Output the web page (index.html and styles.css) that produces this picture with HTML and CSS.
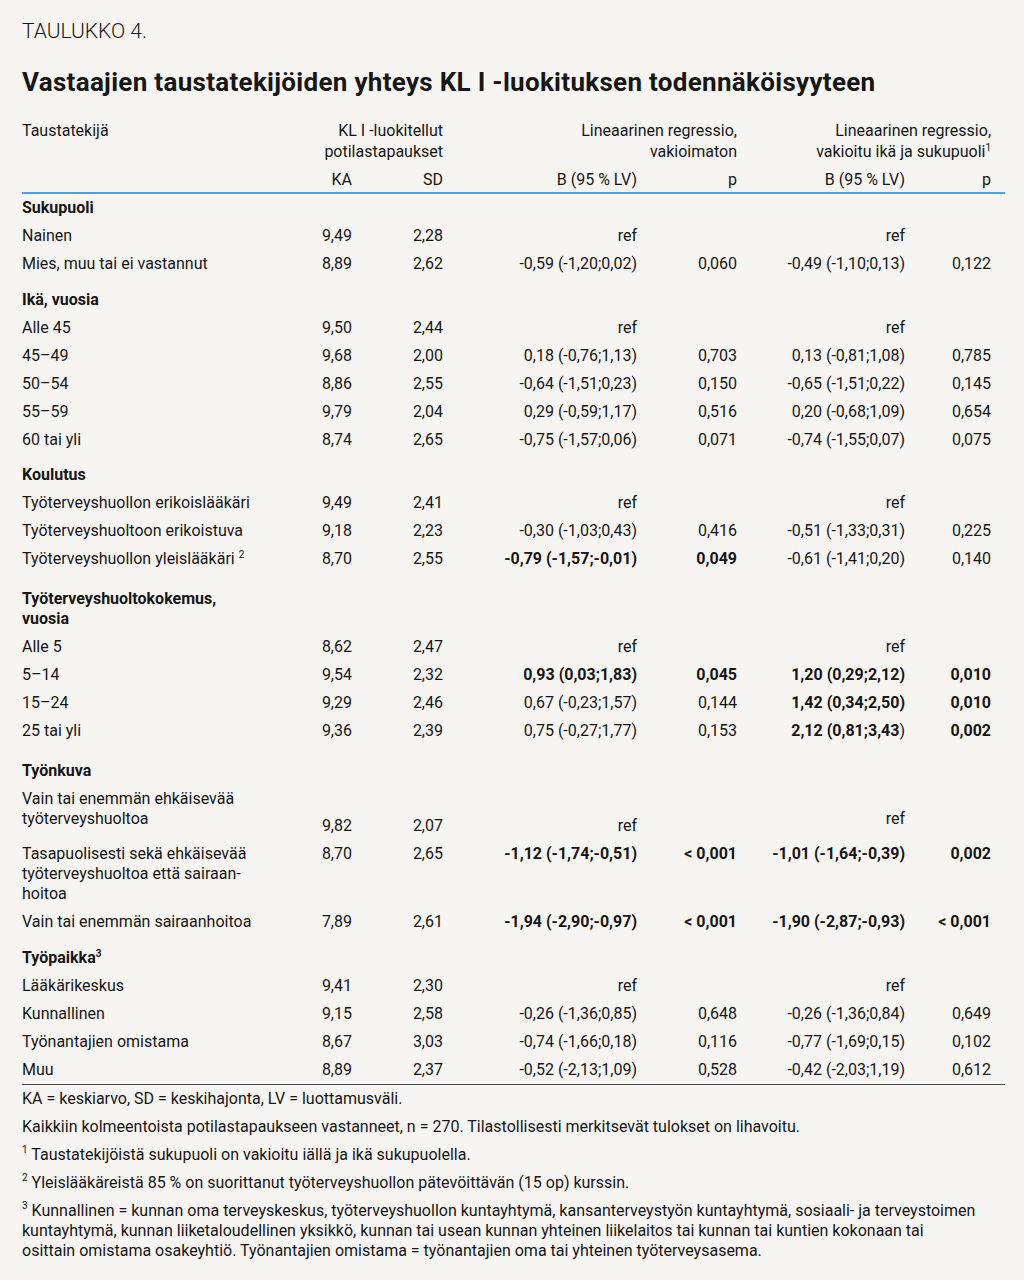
FILE: index.html
```html
<!DOCTYPE html>
<html lang="fi">
<head>
<meta charset="utf-8">
<title>Taulukko 4</title>
<link rel="stylesheet" href="styles.css">
</head>
<body>
<div class="page">
  <div class="label">TAULUKKO 4.</div>
  <h1 class="title">Vastaajien taustatekijöiden yhteys KL I -luokituksen todennäköisyyteen</h1>
  <table class="data">
    <colgroup>
      <col class="c-label"><col class="c-ka"><col class="c-sd"><col class="c-b1"><col class="c-p1"><col class="c-b2"><col class="c-p2">
    </colgroup>
    <thead>
      <tr class="h1">
        <th class="l">Taustatekijä</th>
        <th colspan="2">KL I -luokitellut<br>potilastapaukset</th>
        <th colspan="2">Lineaarinen regressio,<br>vakioimaton</th>
        <th colspan="2" class="last">Lineaarinen regressio,<br>vakioitu ikä ja sukupuoli<sup>1</sup></th>
      </tr>
      <tr class="h2">
        <th class="l"></th>
        <th>KA</th><th>SD</th><th>B (95 % LV)</th><th>p</th><th>B (95 % LV)</th><th class="last">p</th>
      </tr>
    </thead>
    <tbody>
      <tr class="sec first"><td class="l" colspan="7">Sukupuoli</td></tr>
      <tr><td class="l">Nainen</td><td>9,49</td><td>2,28</td><td>ref</td><td></td><td>ref</td><td class="last"></td></tr>
      <tr><td class="l">Mies, muu tai ei vastannut</td><td>8,89</td><td>2,62</td><td>-0,59 (-1,20;0,02)</td><td>0,060</td><td>-0,49 (-1,10;0,13)</td><td class="last">0,122</td></tr>

      <tr class="sec"><td class="l" colspan="7">Ikä, vuosia</td></tr>
      <tr><td class="l">Alle 45</td><td>9,50</td><td>2,44</td><td>ref</td><td></td><td>ref</td><td class="last"></td></tr>
      <tr><td class="l">45–49</td><td>9,68</td><td>2,00</td><td>0,18 (-0,76;1,13)</td><td>0,703</td><td>0,13 (-0,81;1,08)</td><td class="last">0,785</td></tr>
      <tr><td class="l">50–54</td><td>8,86</td><td>2,55</td><td>-0,64 (-1,51;0,23)</td><td>0,150</td><td>-0,65 (-1,51;0,22)</td><td class="last">0,145</td></tr>
      <tr><td class="l">55–59</td><td>9,79</td><td>2,04</td><td>0,29 (-0,59;1,17)</td><td>0,516</td><td>0,20 (-0,68;1,09)</td><td class="last">0,654</td></tr>
      <tr><td class="l">60 tai yli</td><td>8,74</td><td>2,65</td><td>-0,75 (-1,57;0,06)</td><td>0,071</td><td>-0,74 (-1,55;0,07)</td><td class="last">0,075</td></tr>

      <tr class="sec tight"><td class="l" colspan="7">Koulutus</td></tr>
      <tr><td class="l">Työterveyshuollon erikoislääkäri</td><td>9,49</td><td>2,41</td><td>ref</td><td></td><td>ref</td><td class="last"></td></tr>
      <tr><td class="l">Työterveyshuoltoon erikoistuva</td><td>9,18</td><td>2,23</td><td>-0,30 (-1,03;0,43)</td><td>0,416</td><td>-0,51 (-1,33;0,31)</td><td class="last">0,225</td></tr>
      <tr><td class="l">Työterveyshuollon yleislääkäri <sup>2</sup></td><td>8,70</td><td>2,55</td><td class="b">-0,79 (-1,57;-0,01)</td><td class="b">0,049</td><td>-0,61 (-1,41;0,20)</td><td class="last">0,140</td></tr>

      <tr class="sec wide"><td class="l" colspan="7">Työterveyshuoltokokemus,<br>vuosia</td></tr>
      <tr><td class="l">Alle 5</td><td>8,62</td><td>2,47</td><td>ref</td><td></td><td>ref</td><td class="last"></td></tr>
      <tr><td class="l">5–14</td><td>9,54</td><td>2,32</td><td class="b">0,93 (0,03;1,83)</td><td class="b">0,045</td><td class="b">1,20 (0,29;2,12)</td><td class="b last">0,010</td></tr>
      <tr><td class="l">15–24</td><td>9,29</td><td>2,46</td><td>0,67 (-0,23;1,57)</td><td>0,144</td><td class="b">1,42 (0,34;2,50)</td><td class="b last">0,010</td></tr>
      <tr><td class="l">25 tai yli</td><td>9,36</td><td>2,39</td><td>0,75 (-0,27;1,77)</td><td>0,153</td><td><b>2,12 (0,81;3,43</b>)</td><td class="b last">0,002</td></tr>

      <tr class="sec wide"><td class="l" colspan="7">Työnkuva</td></tr>
      <tr class="bottom"><td class="l">Vain tai enemmän ehkäisevää<br>työterveyshuoltoa</td><td>9,82</td><td>2,07</td><td>ref</td><td></td><td class="raised">ref</td><td class="last"></td></tr>
      <tr><td class="l">Tasapuolisesti sekä ehkäisevää<br>työterveyshuoltoa että sairaan-<br>hoitoa</td><td>8,70</td><td>2,65</td><td class="b">-1,12 (-1,74;-0,51)</td><td class="b">&lt; 0,001</td><td class="b">-1,01 (-1,64;-0,39)</td><td class="b last">0,002</td></tr>
      <tr><td class="l">Vain tai enemmän sairaanhoitoa</td><td>7,89</td><td>2,61</td><td class="b">-1,94 (-2,90;-0,97)</td><td class="b">&lt; 0,001</td><td class="b">-1,90 (-2,87;-0,93)</td><td class="b last">&lt; 0,001</td></tr>

      <tr class="sec"><td class="l" colspan="7">Työpaikka<sup>3</sup></td></tr>
      <tr><td class="l">Lääkärikeskus</td><td>9,41</td><td>2,30</td><td>ref</td><td></td><td>ref</td><td class="last"></td></tr>
      <tr><td class="l">Kunnallinen</td><td>9,15</td><td>2,58</td><td>-0,26 (-1,36;0,85)</td><td>0,648</td><td>-0,26 (-1,36;0,84)</td><td class="last">0,649</td></tr>
      <tr><td class="l">Työnantajien omistama</td><td>8,67</td><td>3,03</td><td>-0,74 (-1,66;0,18)</td><td>0,116</td><td>-0,77 (-1,69;0,15)</td><td class="last">0,102</td></tr>
      <tr class="end"><td class="l">Muu</td><td>8,89</td><td>2,37</td><td>-0,52 (-2,13;1,09)</td><td>0,528</td><td>-0,42 (-2,03;1,19)</td><td class="last">0,612</td></tr>
    </tbody>
  </table>
  <div class="notes">
    <p>KA = keskiarvo, SD = keskihajonta, LV = luottamusväli.</p>
    <p>Kaikkiin kolmeentoista potilastapaukseen vastanneet, n = 270. Tilastollisesti merkitsevät tulokset on lihavoitu.</p>
    <p><sup>1</sup> Taustatekijöistä sukupuoli on vakioitu iällä ja ikä sukupuolella.</p>
    <p><sup>2</sup> Yleislääkäreistä 85 % on suorittanut työterveyshuollon pätevöittävän (15 op) kurssin.</p>
    <p><sup>3</sup> Kunnallinen = kunnan oma terveyskeskus, työterveyshuollon kuntayhtymä, kansanterveystyön kuntayhtymä, sosiaali- ja terveystoimen<br>kuntayhtymä, kunnan liiketaloudellinen yksikkö, kunnan tai usean kunnan yhteinen liikelaitos tai kunnan tai kuntien kokonaan tai<br>osittain omistama osakeyhtiö. Työnantajien omistama = työnantajien oma tai yhteinen työterveysasema.</p>
  </div>
</div>
</body>
</html>
```
FILE: styles.css
```css
html, body {
  margin: 0;
  padding: 0;
  background: #f6f5f2;
}
body {
  font-family: Roboto, "Noto Sans", "Liberation Sans", sans-serif;
  color: #161616;
  font-size: 16px;
  line-height: 20px;
}
.page {
  width: 1024px;
  height: 1280px;
  box-sizing: border-box;
  padding: 19px 19px 0 22px;
}
.label {
  font-size: 21px;
  line-height: 24px;
  font-weight: 300;
}
.title {
  margin: 23px 0 22px;
  font-size: 26px;
  line-height: 32px;
  font-weight: 700;
  letter-spacing: 0.3px;
}
.data {
  width: 983px;
  border-collapse: collapse;
  table-layout: fixed;
}
.c-label { width: 268px; }
.c-ka { width: 62px; }
.c-sd { width: 91px; }
.c-b1 { width: 194px; }
.c-p1 { width: 100px; }
.c-b2 { width: 168px; }
.c-p2 { width: 100px; }
.data th, .data td {
  padding: 4px 0;
  text-align: right;
  vertical-align: top;
  white-space: nowrap;
  font-weight: 400;
}
.data .l { text-align: left; }
.data .last { padding-right: 14px; }
.data thead .h1 th {
  line-height: 21px;
  padding: 0;
}
.data thead .h2 th {
  padding: 8px 0 2px;
}
.data thead .h2 th.last { padding-right: 14px; }
.data thead .h1 th.last { padding-right: 14px; }
.data thead .h2 { border-bottom: 2px solid #4aa2df; }
.data sup {
  font-size: 10px;
  line-height: 0;
  vertical-align: 6px;
}
.data .sec td {
  font-weight: 700;
  padding-top: 12px;
}
.data .sec.first td { padding-top: 4px; }
.data .sec.tight td { padding-top: 11px; }
.data .sec.wide td { padding-top: 16px; }
.data .b, .data b { font-weight: 700; }
.data .bottom td { vertical-align: bottom; padding-bottom: 4px; }
.data .bottom td.l { vertical-align: top; padding-bottom: 11px; }
.data .bottom td.raised { padding-bottom: 11px; }
.data .end { border-bottom: 1px solid #4a4a4a; }
.notes {
  padding-top: 4px;
}
.notes p {
  margin: 0 0 8px;
}
.notes sup {
  font-size: 10px;
  line-height: 1;
  vertical-align: top;
}
```
